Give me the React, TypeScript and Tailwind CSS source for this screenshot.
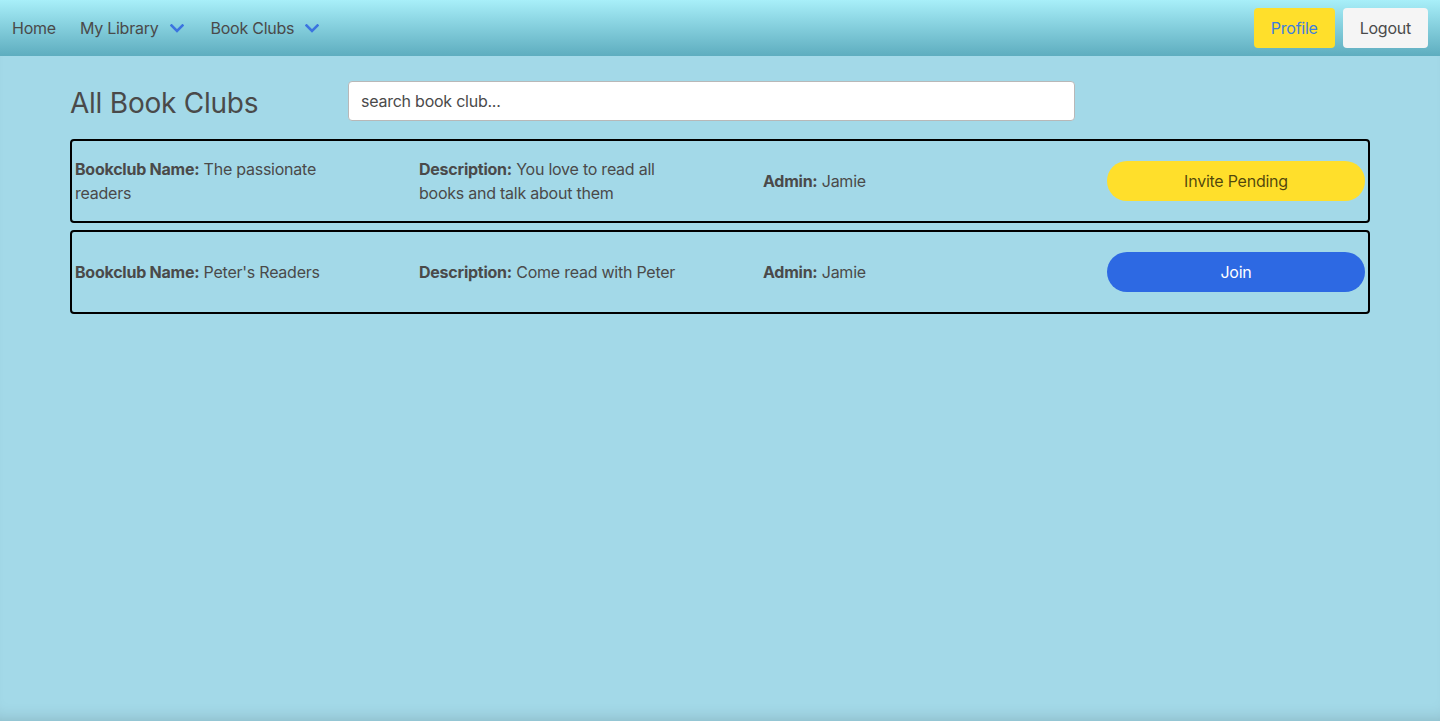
import React from 'react'

const clubs = [
  {
    name: 'The passionate readers',
    description: 'You love to read all books and talk about them',
    admin: 'Jamie',
    status: 'pending',
  },
  {
    name: "Peter's Readers",
    description: 'Come read with Peter',
    admin: 'Jamie',
    status: 'join',
  },
]

const Chevron = () => (
  <svg width="14" height="9" viewBox="0 0 14 9" fill="none" className="shrink-0">
    <polyline points="1.5,1.5 7,7 12.5,1.5" stroke="#3b74e0" strokeWidth="2.6" strokeLinecap="square" />
  </svg>
)

const App: React.FC = () => {
  return (
    <div className="min-h-screen bg-[#a3d9e8] font-['Inter',sans-serif] tracking-[-0.015em] text-[#4a4a4a] text-base shadow-[inset_0_-14px_18px_-14px_rgba(0,0,0,0.18)]">
      <nav className="h-14 flex items-center justify-between bg-gradient-to-b from-[#a8eff9] to-[#5eadbf]">
        <div className="flex items-center h-full">
          <a className="px-3 leading-6">Home</a>
          <a className="pl-3 pr-[15px] flex items-center gap-[11px] leading-6">
            My Library
            <Chevron />
          </a>
          <a className="pl-3 pr-[15px] flex items-center gap-[11px] leading-6">
            Book Clubs
            <Chevron />
          </a>
        </div>
        <div className="flex items-center gap-2 pr-3">
          <button className="h-10 px-[17px] rounded bg-[#ffdf2b] text-[#3d7ddf]">Profile</button>
          <button className="h-10 px-[17px] rounded bg-[#f5f5f5] text-[#4a4a4a]">Logout</button>
        </div>
      </nav>

      <main className="px-[70px] pt-[25px]">
        <div className="flex items-center">
          <h1 className="w-[278px] translate-y-[2px] text-[28px] leading-10 font-normal">All Book Clubs</h1>
          <input
            className="w-[727px] h-10 px-3 rounded bg-white border border-[#b8b8b8] placeholder:text-[#4a4a4a] outline-none"
            placeholder="search book club..."
          />
        </div>

        <div className="mt-[18px] flex flex-col gap-[7px]">
          {clubs.map((club) => (
            <div
              key={club.name}
              className="h-[84px] border-2 border-black rounded px-[3px] grid grid-cols-[344px_344px_344px_1fr] items-center leading-6"
            >
              <p className="max-w-[272px]">
                <span className="font-bold">Bookclub Name:</span> {club.name}
              </p>
              <p className="max-w-[272px]">
                <span className="font-bold">Description:</span> {club.description}
              </p>
              <p>
                <span className="font-bold">Admin:</span> {club.admin}
              </p>
              {club.status === 'pending' ? (
                <button className="h-10 w-full rounded-full bg-[#ffdf2b] text-[rgba(0,0,0,0.7)]">Invite Pending</button>
              ) : (
                <button className="h-10 w-full rounded-full bg-[#2d69e3] text-white">Join</button>
              )}
            </div>
          ))}
        </div>
      </main>
    </div>
  )
}

export default App
